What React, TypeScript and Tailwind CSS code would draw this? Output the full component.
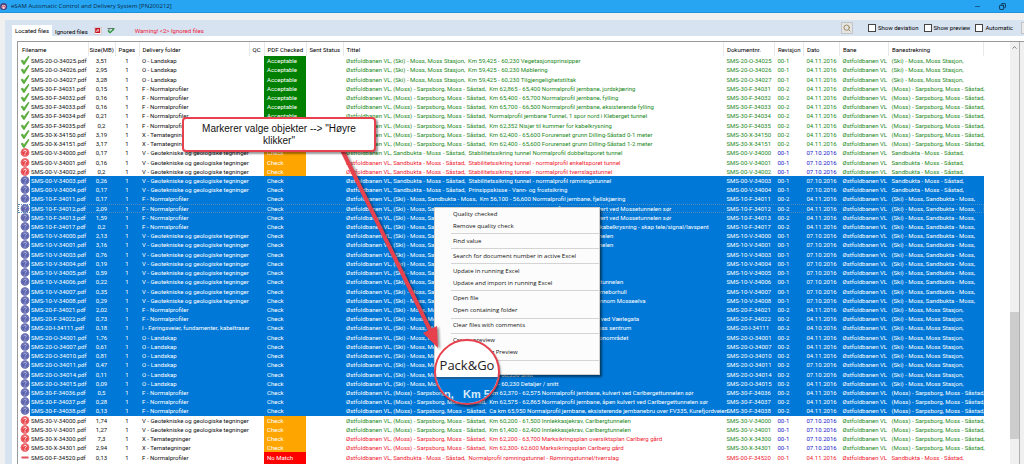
import { Check, ChevronUp, Copy, Minus, Search } from 'lucide-react';
import { clsx } from 'clsx';

type Status = 'ok' | 'bad' | 'minus';

interface FileRow {
    name: string;
    size: string;
    folder: string;
    status: Status;
    check: 'Acceptable' | 'Check' | 'No Match';
    title: string;
    titleColor: string;
    rev: string;
    date: string;
    route: string;
    selected: boolean;
    fresh: boolean;
}

const FOLDERS: Record<string, string> = {
    O: 'O - Landskap',
    F: 'F - Normalprofiler',
    X: 'X - Temategninger',
    V: 'V - Geotekniske og geologiske tegninger',
    I: 'I - Føringsveier, fundamenter, kabeltraser',
};

const ROUTES: Record<string, string> = {
    st: '(Ski) - Moss, Moss Stasjon,',
    sb: '(Ski) - Moss, Sandbukta - Moss,',
    sm: 'Sandbukta - Moss - Såstad,',
    ms: '(Moss) - Sarpsborg, Moss - Såstad,',
};

// name | size | route | revision | date | title | title colour (g/r)
const DATA = `20-O-34025|3,51|st|00-1|04.11.2016|Km 59,425 - 60,230 Vegetasjonsprinsipper|g
20-O-34026|2,95|st|00-1|04.11.2016|Km 59,425 - 60,230 Møblering|g
20-O-34027|3,28|st|00-1|04.11.2016|Km 59,425 - 60,230 Tilgjengelighetstiltak|g
30-F-34031|0,15|ms|00-2|04.11.2016|Km 62,865 - 65,400 Normalprofil jernbane, jordskjæring|g
30-F-34032|0,16|ms|00-2|04.11.2016|Km 65,400 - 65,700 Normalprofil jernbane, fylling|g
30-F-34033|0,16|ms|00-2|04.11.2016|Km 65,700 - 66,500 Normalprofil jernbane, eksisterende fylling|g
30-F-34034|0,21|ms|00-2|04.11.2016|Normalprofil jernbane Tunnel, 1 spor nord i Kleberget tunnel|g
30-F-34035|0,2|ms|00-2|04.11.2016|Km 62,352 Nisjer til kummer for kabelkrysning|g
30-X-34150|3,19|ms|00-2|04.11.2016|Km 62,400 - 65,600 Forurenset grunn Dilling-Såstad 0-1 meter|g
30-X-34151|3,17|ms|00-2|04.11.2016|Km 62,400 - 65,600 Forurenset grunn Dilling-Såstad 1-2 meter|g
00-V-34000|0,17|sm|00-1|07.10.2016|Stabilitetssikring tunnel  Normalprofil dobbeltsporet tunnel|g
00-V-34001|0,16|sm|00-1|07.10.2016|Stabilitetssikring tunnel - normalprofil enkeltsporet tunnel|r
00-V-34002|0,2|sm|00-1|07.10.2016|Stabilitetssikring tunnel - normalprofil tverrslagstunnel|r
00-V-34003|0,26|sm|00-1|07.10.2016|Stabilitetssikring tunnel - normalprofil rømningstunnel|g
00-V-34004|0,17|sm|00-1|07.10.2016|Prinsippskisse - Vann- og frostsikring|g
10-F-34011|0,17|sb|00-2|04.11.2016|Km 56,100 - 56,600 Normalprofil jernbane, fjellskjæring|g
10-F-34012|2,09|sb|00-2|04.11.2016|Km 59,220-59,440 Normalprofil jernbane, kulvert ved Mossetunnelen sør|g
10-F-34013|1,59|sb|00-2|04.11.2016|Km 59,220-59,440 Normalprofil jernbane, kulvert ved Mossetunnelen sør|g
10-F-34017|0,2|sb|00-2|04.11.2016|Km 56,100 - 59,440 Trekkerør og kummer for kabelkrysning - skap tele/signal/lavspent|g
10-V-34000|2,13|sb|00-1|07.10.2016|Km 56,600-59,220 Ingeniørgeologi Mossetunnelen|g
10-V-34001|3,16|sb|00-1|07.10.2016|Km 56,600-59,220 Ingeniørgeologi Mossetunnelen|g
10-V-34003|0,76|sb|00-1|07.10.2016|Km 56,600 - 57,400 Profil|g
10-V-34004|0,19|sb|00-1|07.10.2016|Km 57,400 - 58,200 Profil|g
10-V-34005|0,59|sb|00-1|07.10.2016|Km 58,200 - 59,220 Profil|g
10-V-34006|0,22|sb|00-1|07.10.2016|Km 56,600 - 59,220 Tverrprofiler for rømningstunnelen|g
10-V-34007|0,35|sb|00-1|07.10.2016|Km 56,600 - 59,220 Boreplan, seismikk og kjerneborhull|g
10-V-34008|0,29|sb|00-1|07.10.2016|Km 56,600 - 59,220 Lengdeprofil, kryssing gjennom Mosseelva|g
20-F-34021|2,02|st|00-2|04.11.2016|Km 59,440 - 60,230 Normalprofil|g
20-F-34022|0,73|st|00-2|04.11.2016|Km 59,440 - 60,230 Normalprofil jernbane, kulvert ved Værlegata|g
20-I-34111|0,18|st|00-2|04.10.2016|Km 59,440 - 60,230 Føringsveier, oversiktsplan Moss sentrum|g
20-O-34001|1,76|st|00-2|04.11.2016|Km 59,425 - 60,230 Landskapsplan, oversikt stasjonområdet|g
20-O-34007|0,61|st|00-2|04.11.2016|Km 59,425 - 60,230 Snitt|g
20-O-34010|0,81|st|00-2|04.11.2016|Km 59,425 - 60,230 Snitt|g
20-O-34011|0,47|st|00-2|07.10.2016|Km 59,425 - 60,230 Snitt|g
20-O-34014|0,11|st|00-2|07.10.2016|Km 59,425 - 60,230 Snitt|g
20-O-34015|0,09|st|00-2|04.11.2016|Km 59,425 - 60,230 Detaljer / snitt|g
30-F-34036|0,5|ms|00-2|04.11.2016|Km 62,370 - 62,575 Normalprofil jernbane, kulvert ved Carlbergettunnelen sør|g
30-F-34037|0,28|ms|00-2|04.11.2016|Km 62,575 - 62,865 Normalprofil jernbane, åpen kulvert ved Carlbergettunnelen sør|g
30-F-34038|0,13|ms|00-2|04.11.2016|Ca km 65,950 Normalprofil jernbane, eksisterende jernbanebru over FV335, Kurefjordveien|g
30-V-34000|1,74|ms|00-1|07.10.2016|Km 60,200 - 61,500 Innlekkasjekrav, Carlbergtunnelen|g
30-V-34001|1,27|ms|00-1|07.10.2016|Km 61,400 - 62,400 Innlekkasjekrav, Carlbergtunnelen|g
30-X-34300|7,3|ms|00-1|07.10.2016|Km 62,200 - 63,700 Marksikringsplan oversiktsplan Carlberg gård|r
30-X-34301|2,94|ms|00-1|07.10.2016|Km 62,300- 62,600 Marksikringsplan Carlberg gård|r
00-F-34520|0,13|sm|00-1|04.11.2016|Normalprofil rømningstunnel - Rømningstunnel/tverrslag|r
00-F-34521|0,18|sm|00-1|04.11.2016|Normalprofil rømningstunnel - Rømningstunnel Bredt løp med havarinisje|r`;

const ROWS: FileRow[] = DATA.split('\n').map((line, i) => {
    const [name, size, route, rev, date, title, color] = line.split('|');
    return {
        name: `SMS-${name}`,
        size,
        folder: FOLDERS[name[3]],
        status: i < 10 ? 'ok' : i < 43 ? 'bad' : 'minus',
        check: i < 10 ? 'Acceptable' : i < 43 ? 'Check' : 'No Match',
        title: `Østfoldbanen VL, ${ROUTES[route]}\u00a0 ${title}`,
        titleColor: color === 'r' ? 'text-[#f02030]' : 'text-[#1c8a1c]',
        rev,
        date,
        route: ROUTES[route],
        selected: i >= 13 && i < 39,
        fresh: date.startsWith('07'),
    };
});

const HEADERS = ['Size(MB)', 'Pages', 'Delivery folder', 'QC', 'PDF Checked', 'Sent Status', 'Tittel', 'Dokumentnr.', 'Revisjon', 'Dato', 'Bane', 'Banestrekning'];

const MENU: string[][] = [
    ['Quality checked', 'Remove quality check'],
    ['Find value'],
    ['Search for document number in active Excel'],
    ['Update in running Excel', 'Update and import in running Excel'],
    ['Open file', 'Open containing folder'],
    ['Clear files with comments'],
    ['Create preview', 'Delete existing Preview'],
];

const CHECK_COLORS = {
    Acceptable: 'bg-[#008000]',
    Check: 'bg-[#ffa500]',
    'No Match': 'bg-[#ff0000]',
};

function StatusIcon({ status, selected }: { status: Status; selected: boolean }) {
    if (status === 'ok') {
        return (
            <svg viewBox="0 0 10 10" className="block h-[9px] w-[10px]">
                <path d="M0.6 5.2 2.4 4.4 3.9 6.3 8.6 0.4 9.6 0.8 4.4 9.4 3.2 9.4Z" fill="#5cb338" stroke="#3c8f26" strokeWidth="0.5" />
            </svg>
        );
    }
    if (status === 'minus') {
        return (
            <svg viewBox="0 0 10 10" className="block h-[9px] w-[10px]">
                <rect x="1" y="4" width="8" height="2" rx="0.5" fill="#e0525a" />
            </svg>
        );
    }
    return (
        <svg viewBox="0 0 10 10" className="block h-[9px] w-[10px]">
            <circle cx="5" cy="5" r="4.8" fill={selected ? '#5a62ac' : '#e8464d'} />
            <circle cx="5" cy="5" r="4" fill="none" stroke={selected ? '#8a8cc6' : '#f48a8c'} strokeWidth="0.6" />
            <path d="M3.6 3.9C3.6 2 6.5 2 6.5 3.8 6.5 5 5 4.8 5 6.1" fill="none" stroke={selected ? '#b4b8e2' : '#fff'} strokeWidth="1.1" />
            <circle cx="5" cy="7.6" r="0.7" fill={selected ? '#b4b8e2' : '#fff'} />
        </svg>
    );
}

function TitleBar() {
    return (
        <header className="flex h-[13px] shrink-0 items-center border-b border-[#2292d8] bg-[#27a5f3] pr-[18px]">
            <svg viewBox="0 0 10 10" className="h-[9px] w-[8px]">
                <circle cx="4.5" cy="5" r="4.4" fill="#4b3f78" />
                <circle cx="4.5" cy="5.4" r="2.6" fill="#f0d8e0" />
                <path d="M2.4 6.4 4.4 4 6.8 6.6" fill="none" stroke="#c8324c" strokeWidth="1.2" />
            </svg>
            <h1 className="ml-[3px] font-['Open_Sans',sans-serif] text-[6px] text-[#0b2a44]">eSAM Automatic Control and Delivery System [PN200212]</h1>
            <div className="ml-auto flex items-center gap-[18px] text-[#0b2a44]">
                <button aria-label="Minimize"><Minus size={7} /></button>
                <button aria-label="Restore"><Copy size={7} strokeWidth={3} className="-scale-x-100" /></button>
            </div>
        </header>
    );
}

function Toolbar() {
    return (
        <div className="flex h-4 shrink-0 items-end pl-[7px]">
            <div className="flex h-[11px] items-center" role="tablist">
                <button role="tab" aria-selected="true" className="h-full w-10 bg-white text-black">Located files</button>
                <button role="tab" aria-selected="false" className="ml-[3px] pt-[2px] text-black">Ignored files</button>
            </div>
            <div className="ml-[6px] flex h-[11px] items-center gap-[5px]">
                <button aria-label="Export PDF">
                    <svg viewBox="0 0 8 8" className="h-2 w-2">
                        <rect x="0.5" y="0.5" width="7" height="7" fill="#fff" stroke="#c9b6ba" strokeWidth="0.6" />
                        <rect x="1.2" y="1" width="5" height="5" fill="#c4121f" />
                        <path d="M2.4 4.8 4 2 5 4 2.2 4.2" fill="none" stroke="#fff" strokeWidth="0.6" />
                    </svg>
                </button>
                <button aria-label="Check files" className="relative">
                    <svg viewBox="0 0 8 8" className="h-2 w-2">
                        <path d="M0.5 1.5H7.5M1 3H3M6 1V4" stroke="#56705c" strokeWidth="0.9" />
                    </svg>
                    <Check size={8} strokeWidth={4} className="absolute inset-0 text-[#2c9a3a]" />
                </button>
            </div>
            <p className="ml-5 flex h-[11px] items-center text-[#f0203c]">Warning! &lt;2&gt; Ignored files</p>
            <div className="ml-auto flex h-[14px] items-start">
                <button aria-label="Search" className="mr-[15px] flex h-3 w-3 items-center justify-center border border-[#c4c4c4] bg-[#e4e4e4] text-[#a08a5c]">
                    <Search size={8} strokeWidth={3} className="shrink-0" />
                </button>
                {['Show deviation', 'Show preview', 'Automatic'].map((label, i) => (
                    <label key={label} className={clsx('flex items-center gap-[2px] pt-px text-black', i < 2 ? 'mr-[5px]' : 'mr-2')}>
                        <input type="checkbox" className="h-2 w-2 appearance-none border border-[#444] bg-white" />
                        {label}
                    </label>
                ))}
                <div className="h-3 w-[3px] border border-r-0 border-[#c4c4c4] bg-[#e9e9e9]" />
            </div>
        </div>
    );
}

function FileTable() {
    return (
        <table className="h-[429px] w-full table-fixed border-collapse whitespace-nowrap leading-[9px]">
            <colgroup>
                <col className="w-3" />
                <col className="w-[58px]" />
                <col className="w-[27px]" />
                <col className="w-6" />
                <col className="w-[110px]" />
                <col className="w-[15px]" />
                <col className="w-[42px]" />
                <col className="w-[37px]" />
                <col />
                <col className="w-[51px]" />
                <col className="w-[29px]" />
                <col className="w-9" />
                <col className="w-[49px]" />
                <col className="w-[95px]" />
            </colgroup>
            <thead>
                <tr className="h-[14px] text-left text-black">
                    <th colSpan={2} className="border-r border-[#e8e8e8] p-0 pl-1 font-normal">Filename</th>
                    {HEADERS.map((header) => (
                        <th
                            key={header}
                            className={clsx('border-r border-[#e8e8e8] p-0 font-normal', header === 'Size(MB)' ? 'pl-px' : 'pl-[3px]')}
                        >
                            {header}
                        </th>
                    ))}
                </tr>
            </thead>
            <tbody>
                {ROWS.map((row, i) => {
                    const fill = row.selected && 'bg-[#0078d7]';
                    const cell = clsx('p-0 pl-[3px]', fill);
                    const dark = row.selected ? 'text-white' : 'text-[#111]';
                    const meta = row.selected ? 'text-white' : row.status === 'minus' ? 'text-[#f02030]' : 'text-[#1c8a1c]';
                    const dated = !row.selected && row.fresh ? 'text-[#1818c8]' : meta;
                    return (
                        <tr key={row.name} className={i === 16 ? 'outline-1 -outline-offset-1 outline-dotted outline-[#4a8cc0]' : undefined}>
                            <td className="bg-white p-0 pl-[2px]"><StatusIcon status={row.status} selected={row.selected} /></td>
                            <td className={clsx('p-0 pl-px', fill, dark)}>{row.name}.pdf</td>
                            <td className={clsx('p-0 text-center', fill, dark)}>{row.size}</td>
                            <td className={clsx('p-0 text-center', fill, dark)}>1</td>
                            <td className={clsx(cell, dark)}>{row.folder}</td>
                            <td className={cell} />
                            <td className={clsx('p-0 pl-[3px] text-white', row.selected ? 'bg-[#0078d7]' : CHECK_COLORS[row.check])}>{row.check}</td>
                            <td className={cell} />
                            <td className={clsx(cell, row.selected ? 'text-white' : row.titleColor)}>{row.title}</td>
                            <td className={clsx(cell, meta)}>{row.name}</td>
                            <td className={clsx(cell, dated)}>{row.rev}</td>
                            <td className={clsx(cell, dated)}>{row.date}</td>
                            <td className={clsx(cell, meta)}>Østfoldbanen VL</td>
                            <td className={clsx(cell, meta)}>{row.route}</td>
                        </tr>
                    );
                })}
            </tbody>
        </table>
    );
}

function ContextMenu() {
    return (
        <div
            role="menu"
            className="absolute left-[434px] top-[207px] flex h-[168px] w-[166px] flex-col border border-[#d0d0d0] bg-[#fcfcfc] font-['Open_Sans',sans-serif] text-[6px] text-[#111] shadow-[2px_2px_2px_rgba(0,0,0,0.5)]"
        >
            {MENU.map((group, i) => (
                <div key={i} className="contents">
                    {i > 0 && <hr className="my-px ml-4 h-px shrink-0 border-0 bg-[#d4d4d4]" />}
                    {group.map((item) => (
                        <button key={item} role="menuitem" className="flex min-h-0 flex-1 items-center pl-[18px] text-left">{item}</button>
                    ))}
                </div>
            ))}
            <hr className="my-px ml-4 h-px shrink-0 border-0 bg-[#d4d4d4]" />
            <button role="menuitem" aria-label="Pack&Go" className="min-h-0 flex-1" />
        </div>
    );
}

function Callout() {
    return (
        <>
            <svg viewBox="0 0 110 210" className="absolute left-[334px] top-[144px] h-[210px] w-[110px] drop-shadow-[2px_1px_1px_rgba(0,0,0,0.4)]">
                <path d="M8 6 98 190" stroke="#e8414e" strokeWidth="4" />
                <path d="M89 189 104 204 103 182Z" fill="#e8414e" />
            </svg>
            <p className="absolute left-[182px] top-[117px] flex h-[35px] w-[194px] items-center justify-center rounded border-2 border-[#e8414e] bg-white px-3 text-center font-['Liberation_Sans',sans-serif] text-[10px] leading-3 text-[#111] shadow-[2px_2px_2px_rgba(0,0,0,0.4)]">
                Markerer valge objekter --&gt; "Høyre klikker"
            </p>
            <div className="absolute left-[434px] top-[339px] h-[66px] w-[66px] overflow-hidden rounded-full border-2 border-[#e8414e] bg-white font-['Open_Sans',sans-serif] text-[#222] shadow-[1px_2px_2px_rgba(0,0,0,0.4)]">
                <div className="flex h-9 items-end justify-center text-[13px] leading-6">Pack&amp;Go</div>
                <div className="h-[30px] border-t-2 border-[#1b5f9c] bg-[#0078d7] pl-[8px] pt-[7px] font-['Liberation_Sans',sans-serif] text-[11px] leading-4 font-bold whitespace-pre text-[#d8ecfa]">n,   Km 59</div>
            </div>
        </>
    );
}

export default function App() {
    return (
        <div className="relative flex h-screen flex-col overflow-hidden bg-[#f0f0f0] font-[Roboto,'Liberation_Sans',sans-serif] text-[6px] leading-[9px]">
            <TitleBar />
            <main className="mt-[7px] ml-[5px] flex min-h-0 flex-1 flex-col bg-[#d7e3f1]">
                <Toolbar />
                <div className="ml-[7px] flex min-h-0 flex-1 bg-white pt-[5px] pl-[5px]">
                    <div className="flex min-h-0 flex-1 overflow-hidden border-t border-l border-[#9a9a9a]">
                        <div className="min-w-0 flex-1 pr-[26px]">
                            <FileTable />
                        </div>
                        <div className="flex w-[10px] flex-col items-center border-r border-[#b0b0b0] bg-[#f0f0f0]">
                            <ChevronUp size={7} className="mt-[2px] shrink-0 text-[#333]" />
                            <div className="mt-[261px] h-[127px] w-full bg-[#cdcdcd]" />
                        </div>
                        <div className="w-1 bg-[#f0f0f0]" />
                    </div>
                </div>
            </main>
            <ContextMenu />
            <Callout />
        </div>
    );
}
